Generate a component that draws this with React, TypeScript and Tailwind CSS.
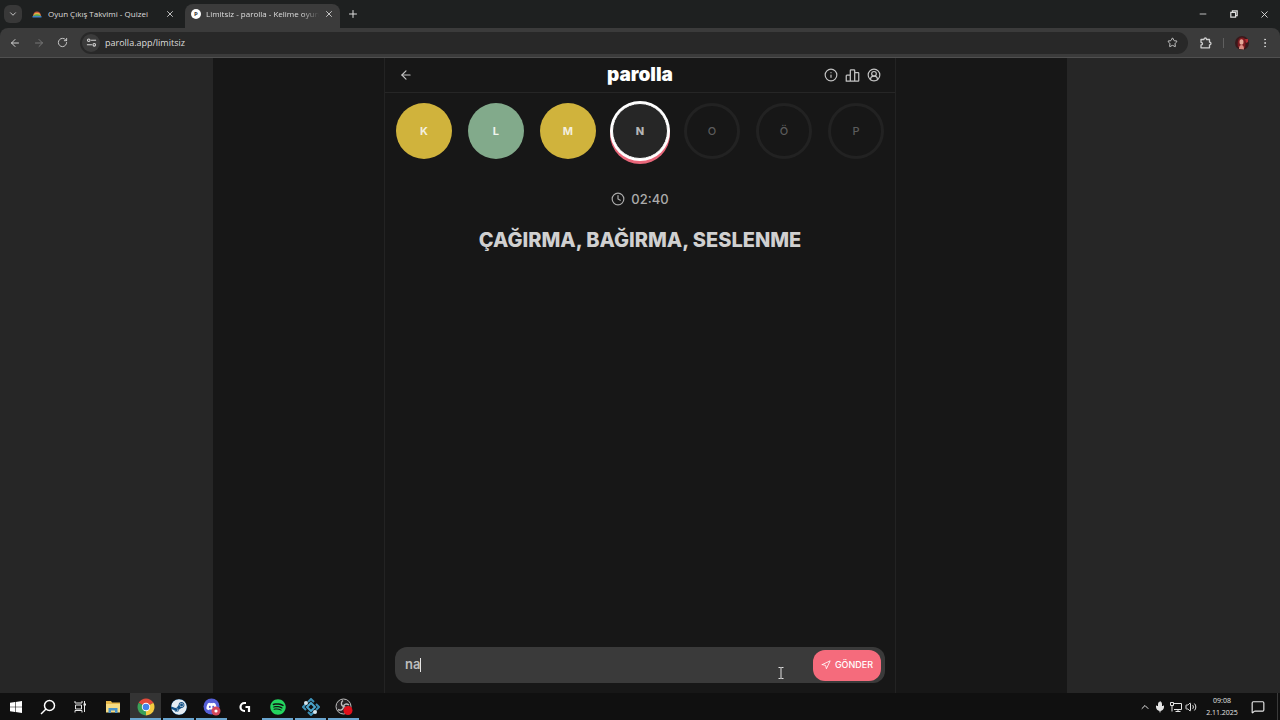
import { useState } from 'react';
import type { ReactNode } from 'react';
import clsx from 'clsx';
import {
    ArrowLeft,
    ArrowRight,
    ChevronDown,
    ChevronUp,
    CircleUserRound,
    Clock,
    EllipsisVertical,
    Info,
    MessageSquare,
    Mic,
    Minus,
    Navigation,
    Plus,
    RotateCw,
    Star,
    Volume2,
    X,
} from 'lucide-react';
import { FaDiscord, FaSpotify, FaSteam } from 'react-icons/fa';

type LetterStatus = 'passed' | 'correct' | 'active' | 'idle';

const letters: { char: string; status: LetterStatus }[] = [
    { char: 'K', status: 'passed' },
    { char: 'L', status: 'correct' },
    { char: 'M', status: 'passed' },
    { char: 'N', status: 'active' },
    { char: 'O', status: 'idle' },
    { char: 'Ö', status: 'idle' },
    { char: 'P', status: 'idle' },
];

const letterStyles: Record<LetterStatus, string> = {
    passed: 'bg-[#d0b33c] text-[#f3efdf] font-bold',
    correct: 'bg-[#82aa8b] text-[#f0f4ee] font-bold',
    active: 'bg-[#262626] text-[#b5b5b5] font-extrabold border border-white shadow-[0_0_0_2px_#fff,0_3px_0_2px_#e8677a]',
    idle: 'border-3 border-[#222222] text-[#5c5c5c] font-medium',
};

const PodiumIcon = () => (
    <svg viewBox="0 0 24 24" className="size-[15px]" fill="none" stroke="currentColor" strokeWidth="2" strokeLinejoin="round">
        <path d="M2 21V12.500a1 1 0 0 1 1-1h5.500V21zM8.500 21V4a1 1 0 0 1 1-1h5a1 1 0 0 1 1 1v17zM15.500 7.500H21a1 1 0 0 1 1 1V20a1 1 0 0 1-1 1h-5.500z" />
    </svg>
);

const SiteSettingsIcon = () => (
    <svg viewBox="0 0 12 12" className="size-[11px]" fill="none" stroke="#d5d5d5" strokeWidth="1.200">
        <circle cx="3" cy="3.500" r="1.400" />
        <path d="M5.500 3.500H11M1 8.500h5.500" />
        <circle cx="9" cy="8.500" r="1.400" />
    </svg>
);

const ExtensionsIcon = () => (
    <svg viewBox="0 0 12 12" className="size-3" fill="none" stroke="currentColor" strokeWidth="1.300" strokeLinejoin="round">
        <path d="M1 2.500h3c0-2 2.500-2 2.500 0H9.500v2.700c2 0 2 2.600 0 2.600v3H1V8c2 0 2-2.700 0-2.700z" />
    </svg>
);

const RainbowIcon = () => (
    <svg viewBox="0 0 10 10" className="size-[10px] shrink-0">
        <path d="M1 7a4 4.500 0 0 1 8 0z" fill="#c9533f" />
        <path d="M1.500 7.200a3.500 3.400 0 0 1 7 0z" fill="#e3b341" />
        <path d="M1.500 7.500a3.500 2.300 0 0 1 7 0z" fill="#53a557" />
        <path d="M.5 7h9v1.500h-9z" fill="#3f82c4" />
    </svg>
);

const RestoreIcon = () => (
    <svg viewBox="0 0 8 8" className="size-2" fill="none" stroke="currentColor" strokeWidth="1.200">
        <path d="M.8 2.400h4.800v4.800H.8z" />
        <path d="M2.400 2V.8h4.800v4.800H6" />
    </svg>
);

const AvatarIcon = () => (
    <svg viewBox="0 0 14 14" className="size-[14px]">
        <circle cx="7" cy="7" r="7" fill="#38191b" />
        <path d="M3 11C2 6 3 1.500 7 1.500S11 5 10 12z" fill="#7e1b20" />
        <path d="M10 3h3v3l-2 1z" fill="#b52c32" />
        <ellipse cx="6.500" cy="6" rx="2" ry="2.800" fill="#e6aa9a" />
        <path d="M4 13c0-3 1-4 2.500-4S9 10 9 13.500z" fill="#dc8d82" />
    </svg>
);

const WindowsIcon = () => (
    <svg viewBox="0 0 12 12" className="size-3" fill="#fff">
        <path d="M0 1.700 5 1v4.700H0zM5.600.9 12 0v5.700H5.600zM0 6.300h5V11l-5-.7zM5.600 6.300H12V12l-6.400-.9z" />
    </svg>
);

const SearchIcon = () => (
    <svg viewBox="0 0 16 16" className="size-4" fill="none" stroke="#fff" strokeWidth="1.500">
        <circle cx="9.500" cy="6.500" r="5" />
        <path d="M6 10 1 15" />
    </svg>
);

const TaskViewIcon = () => (
    <svg viewBox="0 0 13 13" className="size-[13px]" fill="none" stroke="#e5e5e5">
        <path d="M1 1v2h7V1M1.500 5h6v4h-6zM1 12.500v-2h7v2M10.500 1v11" />
        <path d="M9.500 4.500h2.500" strokeWidth="2" />
    </svg>
);

const ExplorerIcon = () => (
    <svg viewBox="0 0 16 14" className="h-[14px] w-4">
        <path d="M1 1h5l1 1.500h8V12H1z" fill="#e8b84a" />
        <path d="M1 4h14v8.500H1z" fill="#f7dc83" />
        <path d="M3.500 8h9v5H10v-2.500H6V13H3.500z" fill="#4a93c9" />
    </svg>
);

const ChromeIcon = () => (
    <svg viewBox="0 0 18 18" className="size-[18px]">
        <path d="M9 9 1.640 4.750A8.500 8.500 0 0 1 16.360 4.750z" fill="#e24a3b" />
        <path d="M9 9 16.360 4.750A8.500 8.500 0 0 1 9 17.500z" fill="#f6cb3f" />
        <path d="M9 9v8.500A8.500 8.500 0 0 1 1.640 4.750z" fill="#3ba158" />
        <path d="M9 5h7.500l-.14-.25L9 4z" fill="#e24a3b" />
        <circle cx="9" cy="9" r="4.200" fill="#fff" />
        <circle cx="9" cy="9" r="3.300" fill="#4384ea" />
    </svg>
);

const DiscordIcon = () => (
    <svg viewBox="0 0 18 18" className="size-[18px]">
        <circle cx="8.500" cy="8.500" r="8" fill="#5660d8" />
        <FaDiscord x="3" y="3" size={11} color="#fff" />
        <circle cx="13" cy="13" r="4.500" fill="#d5475a" />
        <circle cx="13" cy="13" r="1.600" fill="#fff" />
    </svg>
);

const LogitechIcon = () => (
    <svg viewBox="0 0 12 12" className="size-3" fill="none" stroke="#fff" strokeWidth="2.200">
        <path d="M7 2H5.500a3.800 3.800 0 0 0 0 8H6" />
        <path d="M6.500 6H10v5" />
    </svg>
);

const DiamondIcon = () => (
    <svg viewBox="0 0 18 18" className="size-[18px]" fill="none" strokeWidth="2">
        <path d="m6 4 3-3 3 3M14 6l3 3-3 3M12 14l-3 3-3-3M4 12 1 9l3-3" stroke="#3d91b8" />
        <path d="m9 5 4 4-4 4-4-4z" stroke="#4ba6cd" />
        <circle cx="4" cy="5" r="2" fill="#d6e6ee" />
        <circle cx="13" cy="14" r="2" fill="#d6e6ee" />
    </svg>
);

const ObsIcon = () => (
    <svg viewBox="0 0 18 18" className="size-[18px]" fill="none" stroke="#bdbdbd">
        <circle cx="8.500" cy="8.500" r="7.500" fill="#242224" />
        <path d="M8 2.500c-2.500 2-2 5 .5 6M14 7c-2.500-2-5-1-5.500 1.500M3 11.500c3 1.500 5.500 0 5.500-3M8.500 8.500c3 .5 3.500 3.500 1.500 6" strokeWidth="1.400" />
        <circle cx="13" cy="12.500" r="4.500" fill="#e0101b" stroke="none" />
    </svg>
);

const NetworkIcon = () => (
    <svg viewBox="0 0 12 12" className="size-3" fill="none" stroke="currentColor">
        <path d="M4 2.500h7.500v6H4M5.500 10.500h5M8 8.500v2M.5 1.500h3v3h-3zM2 4.500v6" />
    </svg>
);

const apps: { name: string; icon: ReactNode; open?: boolean; focused?: boolean }[] = [
    { name: 'Dosya Gezgini', icon: <ExplorerIcon /> },
    { name: 'Chrome', icon: <ChromeIcon />, open: true, focused: true },
    { name: 'Steam', icon: <FaSteam className="size-4 rounded-full bg-[#145287] text-[#e5edf3]" />, open: true },
    { name: 'Discord', icon: <DiscordIcon />, open: true },
    { name: 'Logitech G', icon: <LogitechIcon /> },
    { name: 'Spotify', icon: <FaSpotify className="size-4 text-[#24d45f]" />, open: true },
    { name: 'Launcher', icon: <DiamondIcon />, open: true },
    { name: 'OBS', icon: <ObsIcon />, open: true },
];

const TabStrip = () => (
    <div className="flex h-7 items-center bg-[#1e2020] pl-1 text-[8px] text-[#dedede]">
        <button aria-label="Sekmelerde ara" className="flex size-[18px] items-center justify-center rounded-md bg-[#383838]">
            <ChevronDown className="size-[10px]" />
        </button>
        <div className="ml-[10px] flex w-[153px] items-center gap-[6px] pr-[10px]">
            <RainbowIcon />
            <span className="grow whitespace-nowrap">Oyun Çıkış Takvimi - Quizei</span>
            <button aria-label="Sekmeyi kapat">
                <X className="size-[10px]" />
            </button>
        </div>
        <div className="flex h-6 w-[155px] items-center gap-[5px] self-end rounded-t-lg bg-[#3b3b3b] pr-[6px] pb-1 pl-[6px]">
            <span className="flex size-[10px] shrink-0 items-center justify-center rounded-full bg-white text-[6px] font-bold text-[#333]">
                P
            </span>
            <span className="min-w-0 grow mask-r-from-85% whitespace-nowrap">
                Limitsiz - parolla - Kelime oyun
            </span>
            <button aria-label="Sekmeyi kapat" className="shrink-0">
                <X className="size-[10px]" />
            </button>
        </div>
        <button aria-label="Yeni sekme" className="ml-[7px]">
            <Plus className="size-3" />
        </button>
        <div className="ml-auto flex items-center">
            <button aria-label="Simge durumuna küçült" className="flex w-[31px] justify-center">
                <Minus className="size-[10px]" />
            </button>
            <button aria-label="Önceki boyut" className="flex w-[31px] justify-center">
                <RestoreIcon />
            </button>
            <button aria-label="Kapat" className="flex w-[31px] justify-center">
                <X className="size-[11px]" />
            </button>
        </div>
    </div>
);

const Toolbar = () => (
    <div className="bg-[#1e2020]">
        <div className="flex h-[30px] items-center rounded-t-lg border-b border-[#505050] bg-[#3b3b3b] px-[9px] text-[#d0d0d0]">
            <button aria-label="Geri" className="mr-3">
                <ArrowLeft className="size-3" />
            </button>
            <button aria-label="İleri" className="mr-3 text-[#777777]">
                <ArrowRight className="size-3" />
            </button>
            <button aria-label="Yenile" className="mr-3">
                <RotateCw className="size-[11px]" />
            </button>
            <div className="flex h-[22px] grow items-center rounded-full bg-[#282828] pr-[10px] pl-[2px]">
                <span className="flex size-[18px] items-center justify-center rounded-full bg-[#3b3b3b]">
                    <SiteSettingsIcon />
                </span>
                <input
                    aria-label="Adres"
                    defaultValue="parolla.app/limitsiz"
                    className="ml-[5px] grow text-[9px] text-[#dddddd] outline-none"
                />
                <button aria-label="Yer işareti">
                    <Star className="size-[11px]" />
                </button>
            </div>
            <button aria-label="Uzantılar" className="ml-3">
                <ExtensionsIcon />
            </button>
            <span className="ml-[11px] h-[10px] w-px bg-[#5f5f5f]" />
            <button aria-label="Profil" className="ml-[11px]">
                <AvatarIcon />
            </button>
            <button aria-label="Menü" className="ml-[10px]">
                <EllipsisVertical className="size-3" />
            </button>
        </div>
    </div>
);

const Game = () => {
    const [answer, setAnswer] = useState('na');

    return (
        <main className="flex w-full max-w-[512px] flex-col border-x border-[#232323] font-[Inter,sans-serif]">
            <header className="grid h-[35px] grid-cols-3 items-center border-b border-[#262626] px-[14px] text-[#c4c4c4]">
                <a href="#" aria-label="Geri dön">
                    <ArrowLeft className="size-[14px]" />
                </a>
                <h1 className="text-center text-[19px] leading-5 font-black text-white">parolla</h1>
                <nav className="flex items-center justify-end gap-[7px]">
                    <a href="#" aria-label="Nasıl oynanır">
                        <Info className="size-[14px]" />
                    </a>
                    <a href="#" aria-label="İstatistikler">
                        <PodiumIcon />
                    </a>
                    <a href="#" aria-label="Profil">
                        <CircleUserRound className="size-[14px]" />
                    </a>
                </nav>
            </header>
            <ul className="flex justify-center gap-4 pt-[10px]">
                {letters.map(({ char, status }) => (
                    <li
                        key={char}
                        className={clsx(
                            'flex size-14 items-center justify-center rounded-full text-[11px]',
                            letterStyles[status]
                        )}
                    >
                        {char}
                    </li>
                ))}
            </ul>
            <div className="mt-[30px] flex items-center justify-center gap-[6px] text-[13px] leading-5 font-medium text-[#ababab]">
                <Clock className="size-[14px]" />
                <span>02:40</span>
            </div>
            <h2 className="mt-[15px] text-center text-xl leading-8 font-extrabold text-[#d0d0d0]">
                ÇAĞIRMA, BAĞIRMA, SESLENME
            </h2>
            <form
                className="relative mx-[10px] mt-auto mb-[10px] flex h-9 items-center rounded-xl bg-[#3a3a3a] pr-1 pl-[10px]"
                onSubmit={(e) => e.preventDefault()}
            >
                <label className="flex grow items-center">
                    <input
                        aria-label="Cevap"
                        value={answer}
                        onChange={(e) => setAnswer(e.target.value)}
                        className="field-sizing-content text-[13px] font-semibold text-[#bdbdbd] caret-transparent outline-none"
                    />
                    <span className="h-[14px] w-px bg-[#e5e5e5]" />
                </label>
                <button className="flex h-[31px] w-[68px] items-center justify-center gap-1 rounded-xl bg-[#f56b7c] text-[9px] font-medium text-white">
                    <Navigation className="size-[10px]" />
                    GÖNDER
                </button>
                <svg
                    viewBox="0 0 6 12"
                    className="absolute right-[101px] bottom-1 h-3 w-[6px]"
                    fill="none"
                    stroke="#e0e0e0"
                >
                    <path d="M.5.5h2l.5.500.5-.5h2M3 1v10M.5 11.500h2l.5-.5.5.500h2" />
                </svg>
            </form>
        </main>
    );
};

const Taskbar = () => (
    <footer className="flex h-[27px] items-center bg-[#101010] text-[#e5e5e5]">
        <button aria-label="Başlat" className="flex w-8 justify-center">
            <WindowsIcon />
        </button>
        <button aria-label="Ara" className="flex w-8 justify-center">
            <SearchIcon />
        </button>
        <button aria-label="Görev görünümü" className="flex w-8 justify-center">
            <TaskViewIcon />
        </button>
        {apps.map(({ name, icon, open, focused }) => (
            <button
                key={name}
                aria-label={name}
                className={clsx(
                    'mx-px flex h-full w-[31px] items-center justify-center border-y-2 border-t-transparent',
                    open ? 'border-b-[#6aa5cf]' : 'border-b-transparent',
                    focused && 'bg-[#343434]'
                )}
            >
                {icon}
            </button>
        ))}
        <div className="ml-auto flex h-full items-center">
            <ChevronUp className="size-3" />
            <Mic className="mr-1 ml-[3px] size-3 fill-current" />
            <NetworkIcon />
            <Volume2 className="ml-[3px] size-3" />
            <div className="ml-1 w-[42px] text-center text-[7px] leading-3">
                <p>09:08</p>
                <p>2.11.2025</p>
            </div>
            <button aria-label="Bildirimler" className="ml-2">
                <MessageSquare className="size-[14px]" />
            </button>
            <span className="mr-[2px] ml-3 h-full w-px bg-[#3a3a3a]" />
        </div>
    </footer>
);

export default function App() {
    return (
        <div className="flex min-h-screen flex-col bg-[#262626] font-['Open_Sans','Noto_Sans',sans-serif]">
            <TabStrip />
            <Toolbar />
            <div className="mx-auto flex w-2/3 grow justify-center bg-[#171717]">
                <Game />
            </div>
            <Taskbar />
        </div>
    );
}
